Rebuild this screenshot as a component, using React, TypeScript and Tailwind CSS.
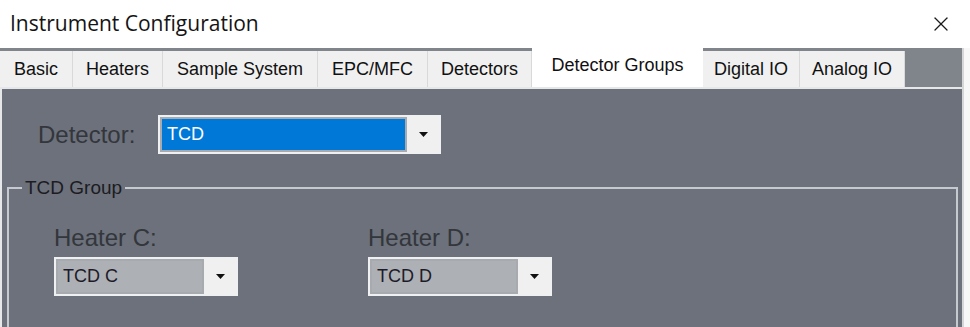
import { X } from 'lucide-react';

const tabs = [
  { name: 'Basic', w: 'w-[73px]' },
  { name: 'Heaters', w: 'w-[90px]' },
  { name: 'Sample System', w: 'w-[155px]' },
  { name: 'EPC/MFC', w: 'w-[110px]' },
  { name: 'Detectors', w: 'w-[104px]' },
  { name: 'Detector Groups', w: 'w-[171px]', active: true },
  { name: 'Digital IO', w: 'w-[97px]' },
  { name: 'Analog IO', w: 'w-[105px]' },
];

function Caret() {
  return (
    <svg width="9" height="5" viewBox="0 0 9 5">
      <path d="M0 0h9L4.5 5z" fill="#111" />
    </svg>
  );
}

function Combo({ value, selected, width }: { value: string; selected?: boolean; width: string }) {
  return (
    <div className={`flex h-[39px] ${width} border-2 border-[#eef0f2] bg-[#f0f0f0]`}>
      <div
        className={`flex flex-1 items-center border-2 border-[#a7aaae] pl-[5px] text-[18px] ${
          selected ? 'bg-[#0078d7] text-white' : 'bg-[#adb0b4] text-[#1d1b2a]'
        }`}
      >
        {value}
      </div>
      <div className="flex w-[32px] items-center justify-center">
        <Caret />
      </div>
    </div>
  );
}

export default function App() {
  return (
    <div className="h-[327px] w-[970px] overflow-hidden bg-white font-['Liberation_Sans',Arial,sans-serif]">
      {/* Title bar */}
      <div className="flex h-[48px] items-center justify-between pl-[10px] pr-[17px]">
        <span className="font-['Open_Sans',sans-serif] text-[21px] text-[#141414]">Instrument Configuration</span>
        <X size={24} strokeWidth={1.3} className="text-[#1a1a1a]" />
      </div>

      <div className="flex">
        <div className="w-[962px]">
          {/* Tabs */}
          <div className="flex h-[39px] bg-[#80858c]">
            {tabs.map((t) =>
              t.active ? (
                <div
                  key={t.name}
                  className={`${t.w} flex h-[39px] items-center justify-center bg-white pb-[4px] text-[18px] text-[#111]`}
                >
                  {t.name}
                </div>
              ) : (
                <div
                  key={t.name}
                  className={`${t.w} mt-[3px] flex h-[36px] items-center justify-center border-r border-[#d9d9d9] bg-[#f0f0f0] text-[18px] text-[#111]`}
                >
                  {t.name}
                </div>
              )
            )}
          </div>

          {/* Panel */}
          <div className="h-[240px] border-l-2 border-t-2 border-[#e6e7e9] bg-[#6c717b] pl-[5px] pr-[4px]">
            <div className="mt-[26px] flex items-center">
              <span className="ml-[31px] w-[120px] text-[24px] text-[#33363b]">Detector:</span>
              <Combo value="TCD" selected width="w-[283px]" />
            </div>

            <fieldset className="mt-[23px] h-[200px] border-2 border-b-0 border-[#c6c9cd]">
              <legend className="ml-[13px] px-[3px] text-[19px] leading-[22px] text-[#1c1c22]">TCD Group</legend>
              <div className="mt-[25px] flex gap-[130px] pl-[45px]">
                <div className="flex flex-col">
                  <span className="mb-[5px] text-[24px] leading-[28px] text-[#33363b]">Heater C:</span>
                  <Combo value="TCD C" width="w-[184px]" />
                </div>
                <div className="flex flex-col">
                  <span className="mb-[5px] text-[24px] leading-[28px] text-[#33363b]">Heater D:</span>
                  <Combo value="TCD D" width="w-[184px]" />
                </div>
              </div>
            </fieldset>
          </div>
        </div>
        <div className="flex-1 border-l-2 border-[#d5d6d8] bg-[#f7f7f7]" />
      </div>
    </div>
  );
}
